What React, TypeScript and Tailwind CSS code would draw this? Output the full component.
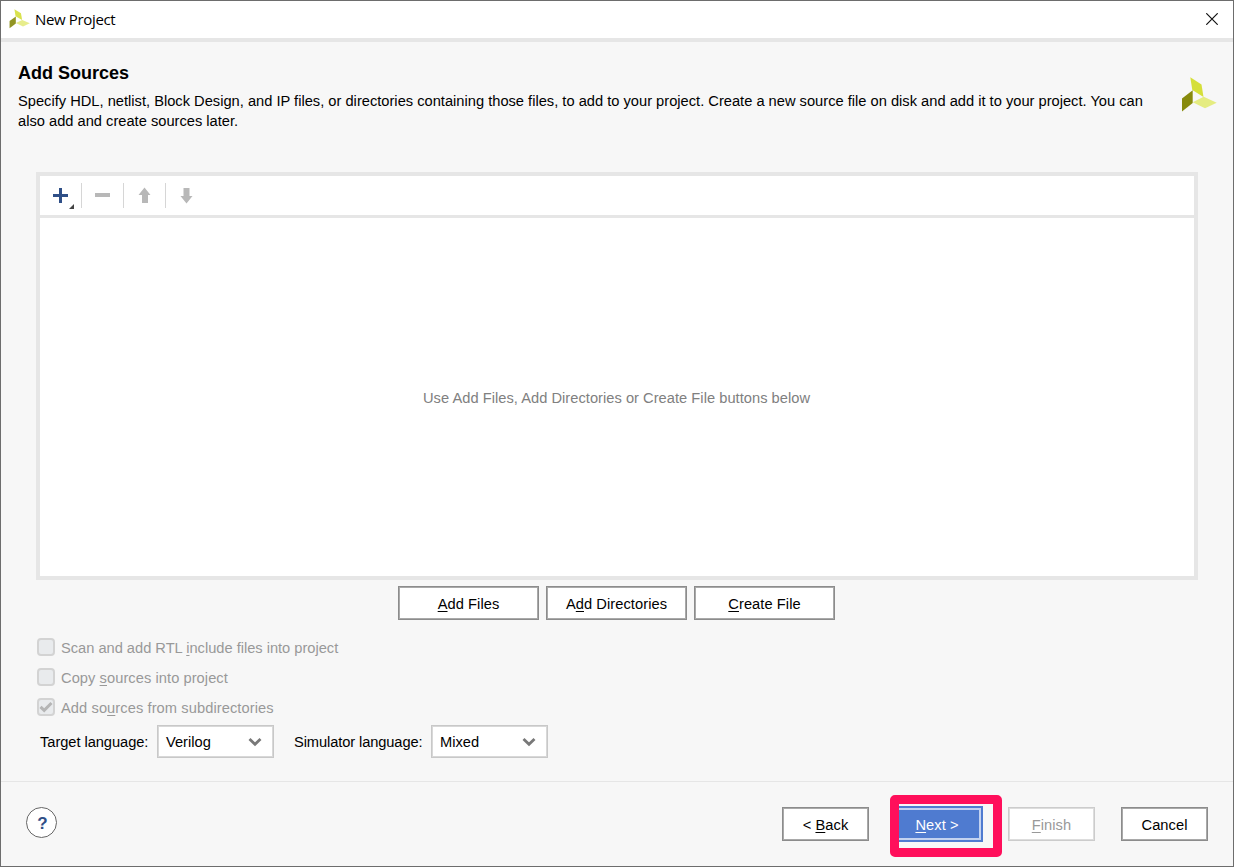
import type { ReactNode } from "react";
import { clsx } from "clsx";

const Logo = ({ className }: { className?: string }) => (
  <svg viewBox="0 0 36 36" className={className} preserveAspectRatio="none">
    <path d="M9.3 0.3 20.5 7.5 22.5 20 11.3 13Z" fill="#d5df3a" />
    <path d="M1 21.5 11.7 13.3V26L1 34.5Z" fill="#878a0c" />
    <path d="M11.7 25.3 22.7 19.7 35.7 25.7 24 31.3Z" fill="#e5ec80" />
  </svg>
);

const Key = ({ children }: { children: ReactNode }) => (
  <span className="underline decoration-1 underline-offset-2">{children}</span>
);

type ButtonProps = {
  children: ReactNode;
  className?: string;
  disabled?: boolean;
};

const Button = ({ children, className, disabled }: ButtonProps) => (
  <button
    disabled={disabled}
    className={clsx(
      "h-[34px] shrink-0 border bg-white pt-0.5 tracking-[0.06px]",
      disabled
        ? "border-[#cccccc] text-[#999999] inset-ring inset-ring-[#dddddd]"
        : "border-[#8c8c8c] text-black inset-ring inset-ring-[#a9a9a9]",
      className
    )}
  >
    {children}
  </button>
);

type CheckOptionProps = {
  children: ReactNode;
  className?: string;
  checked?: boolean;
};

const CheckOption = ({ children, className, checked }: CheckOptionProps) => (
  <div
    className={clsx(
      "flex h-[30px] items-center gap-1.5 text-[#999999]",
      className
    )}
  >
    <div className="flex size-[18px] items-center justify-center rounded-[4px] border-2 border-[#d3d3d3] bg-[#e9ebed]">
      {checked && (
        <svg viewBox="0 0 14 14" className="size-3.5 shrink-0">
          <path
            d="M1.5 6.8 5.2 10.3 12.5 3"
            fill="none"
            stroke="#b5b5b5"
            strokeWidth="3"
          />
        </svg>
      )}
    </div>
    <span className="pt-0.5">{children}</span>
  </div>
);

const Select = ({ value }: { value: string }) => (
  <div className="flex h-[33px] w-[117px] items-center justify-between border border-[#c8c8c8] bg-white pt-px pr-[11px] pl-2 inset-ring inset-ring-[#d8d8d8]">
    <span>{value}</span>
    <svg viewBox="0 0 14 10" className="h-2.5 w-3.5">
      <path
        d="M1.5 2 7 7.3 12.5 2"
        fill="none"
        stroke="#787878"
        strokeWidth="2.8"
      />
    </svg>
  </div>
);

const ToolSeparator = () => <div className="h-[25px] w-px bg-[#d6d6d6]" />;

const Toolbar = () => (
  <div className="flex h-[42px] items-center border-b-3 border-[#e6e6e6]">
    <svg viewBox="0 0 41 39" className="h-[39px] w-[41px]">
      <path d="M13 18h6v-6h3v6h6v3h-6v6h-3v-6h-6z" fill="#2f4f87" />
      <path d="M34 28v5h-5z" fill="#444444" />
    </svg>
    <ToolSeparator />
    <svg viewBox="0 0 41 39" className="h-[39px] w-[41px]">
      <path d="M13 17h15v4H13z" fill="#b8b8b8" />
    </svg>
    <ToolSeparator />
    <svg viewBox="0 0 41 39" className="h-[39px] w-[41px]">
      <path d="M20.5 11.5 26.5 19H24v8h-6v-8h-3.5z" fill="#b8b8b8" />
    </svg>
    <ToolSeparator />
    <svg viewBox="0 0 41 39" className="h-[39px] w-[41px]">
      <path d="M17.5 12h6v8h3l-6 7.5-6-7.5h3z" fill="#b8b8b8" />
    </svg>
  </div>
);

const App = () => {
  return (
    <div className="flex h-[867px] w-[1234px] flex-col overflow-hidden border border-[#6d6d6d] bg-[#f7f7f7] font-['Liberation_Sans',Arial,sans-serif] text-[14.67px] leading-5 text-black">
      {/* Title bar */}
      <header className="flex h-[41px] items-center border-b-4 border-[#e6e6e6] bg-white pr-[15px] pb-px pl-2">
        <Logo className="h-5 w-[21px] opacity-90" />
        <span className="ml-[5px] font-['Open_Sans',sans-serif] text-[15px] tracking-[-0.35px]">
          New Project
        </span>
        <svg viewBox="0 0 12 12" className="ml-auto size-3">
          <path d="M0.3 0.3 11.7 11.7M11.7 0.3 0.3 11.7" stroke="#111111" strokeWidth="1.2" />
        </svg>
      </header>

      {/* Heading */}
      <div className="flex h-[130px] justify-between pt-[21px] pr-4 pl-[17px]">
        <div>
          <h1 className="text-[18px] leading-5 font-bold">Add Sources</h1>
          <p className="mt-2 w-[1140px] whitespace-nowrap tracking-[0.005px]">
            Specify HDL, netlist, Block Design, and IP files, or directories
            containing those files, to add to your project. Create a new source
            file on disk and add it to your project. You can
            <br />
            also add and create sources later.
          </p>
        </div>
        <Logo className="mt-[14px] size-9 shrink-0" />
      </div>

      {/* Source list */}
      <div className="mx-[35px] flex h-[408px] shrink-0 flex-col border-4 border-[#e6e6e6] bg-white">
        <Toolbar />
        <div className="flex flex-1 items-center justify-center pt-px pr-px text-[#808080] tracking-[0.03px]">
          Use Add Files, Add Directories or Create File buttons below
        </div>
      </div>

      <div className="mt-1.5 flex justify-center gap-[7px] pr-px">
        <Button className="w-[141px]">
          <Key>A</Key>dd Files
        </Button>
        <Button className="w-[141px]">
          A<Key>d</Key>d Directories
        </Button>
        <Button className="w-[141px]">
          <Key>C</Key>reate File
        </Button>
      </div>

      {/* Options */}
      <div className="mt-3 ml-9">
        <CheckOption className="tracking-[-0.015px]">
          Scan and add RTL <Key>i</Key>nclude files into project
        </CheckOption>
        <CheckOption className="tracking-[0.06px]">
          Copy <Key>s</Key>ources into project
        </CheckOption>
        <CheckOption className="tracking-[0.08px]" checked>
          Add so<Key>u</Key>rces from subdirectories
        </CheckOption>
      </div>

      <div className="mt-[3px] ml-[39px] flex items-center">
        <span className="w-[117px] tracking-[-0.05px]">Target language:</span>
        <Select value="Verilog" />
        <span className="ml-5 w-[137px] tracking-[-0.1px]">
          Simulator language:
        </span>
        <Select value="Mixed" />
      </div>

      {/* Footer */}
      <footer className="mt-auto flex h-[85px] shrink-0 items-center border-t border-[#e6e6e6] pr-[25px] pl-[25px]">
        <div className="mb-[3px] flex size-[31px] items-center justify-center rounded-full border border-[#666666] bg-white pt-0.5 pl-0.5 text-[17px] font-bold text-[#2f4f87]">
          ?
        </div>
        <Button className="ml-auto w-[87px]">
          &lt; <Key>B</Key>ack
        </Button>
        <div className="mt-1 ml-[21px] flex h-[62px] w-[112px] items-center rounded-[5px] border-9 border-[#ff0f5b]">
          <button className="mb-1 h-9 w-[84px] border-2 border-l-0 border-[#4f7bd0] bg-[#4f7bd0] text-white">
            <span className="flex h-full items-center justify-center border-2 border-l-0 border-[#c3d2f0] pt-0.5 pr-1 tracking-[0.06px]">
              <span>
                <Key>N</Key>ext &gt;
              </span>
            </span>
          </button>
        </div>
        <Button className="ml-1.5 w-[87px]" disabled>
          <Key>F</Key>inish
        </Button>
        <Button className="ml-[26px] w-[87px]">Cancel</Button>
      </footer>
    </div>
  );
};

export default App;
